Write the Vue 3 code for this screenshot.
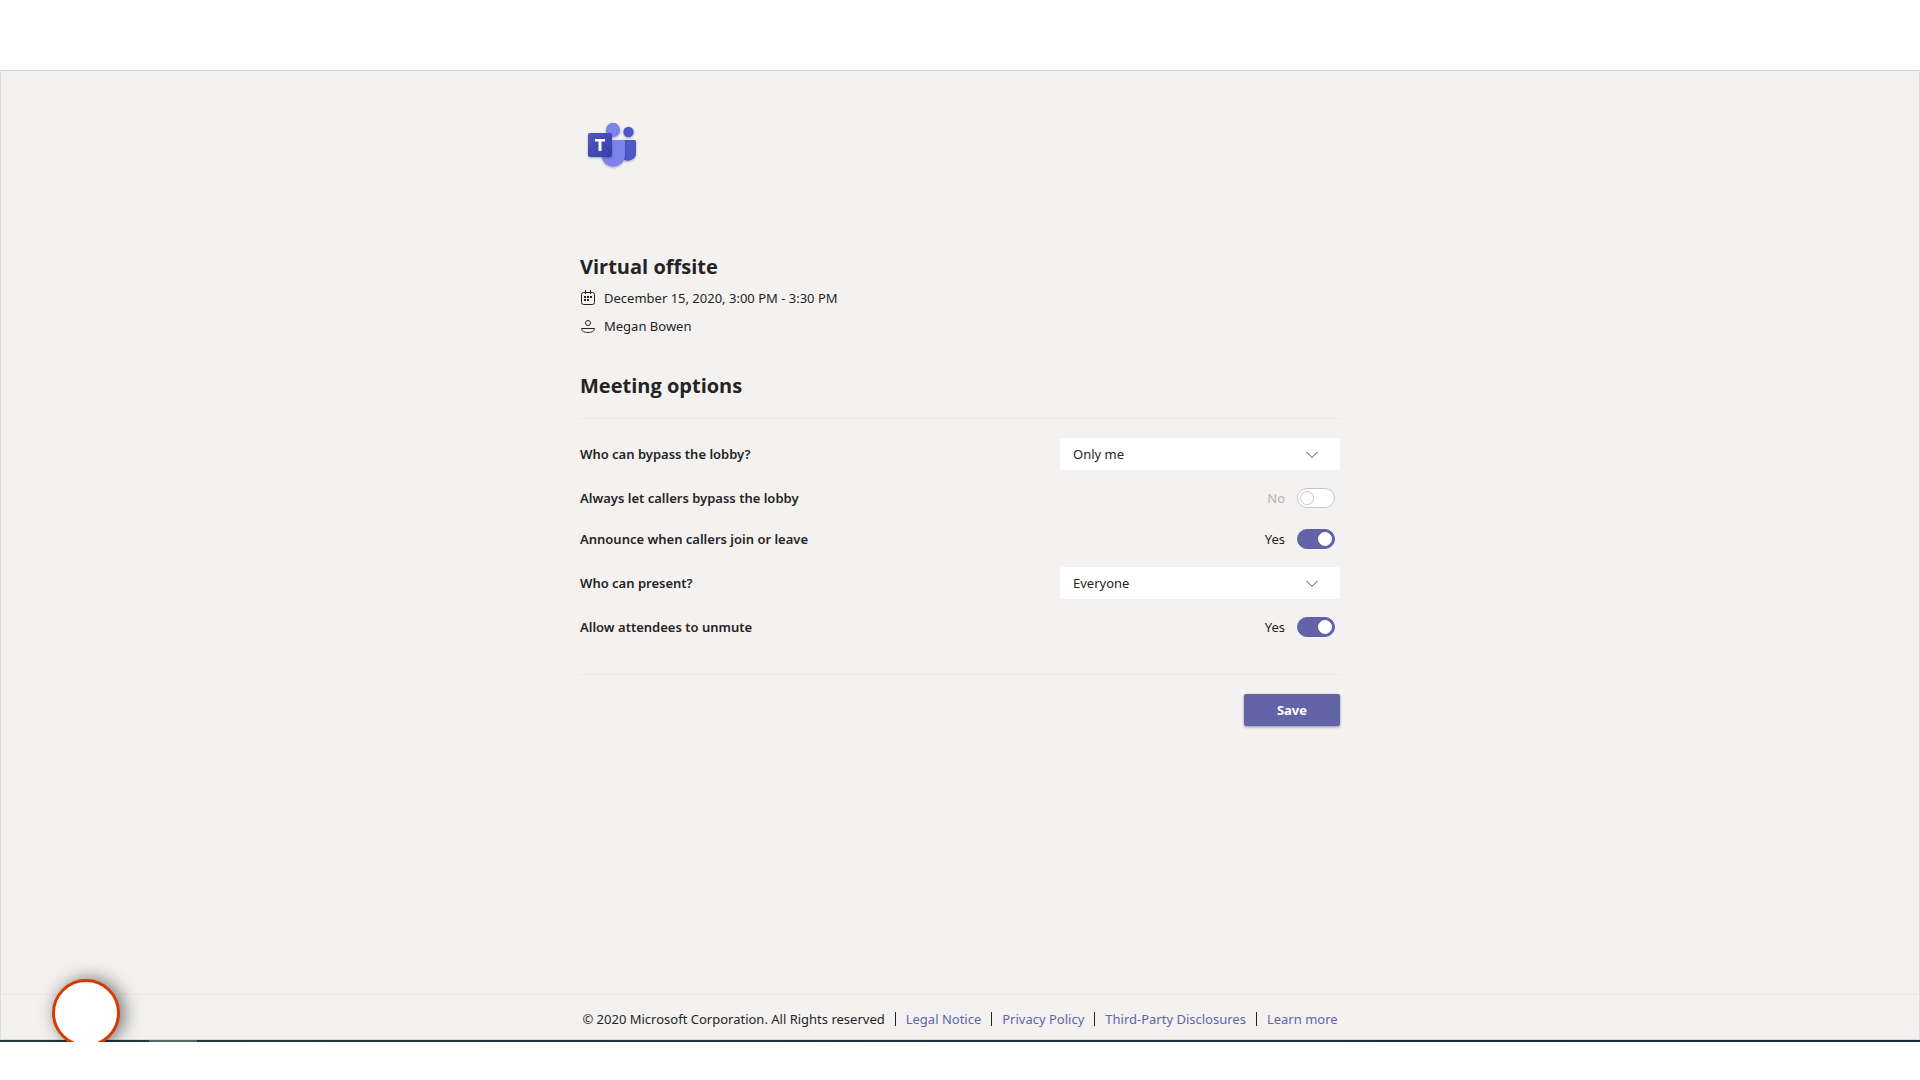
<script setup>
import { reactive } from 'vue'

const options = reactive([
  { id: 'lobby', label: 'Who can bypass the lobby?', type: 'select', value: 'Only me', choices: ['Only me', 'People in my organization', 'Everyone'] },
  { id: 'callers', label: 'Always let callers bypass the lobby', type: 'toggle', value: false },
  { id: 'announce', label: 'Announce when callers join or leave', type: 'toggle', value: true },
  { id: 'present', label: 'Who can present?', type: 'select', value: 'Everyone', choices: ['Everyone', 'People in my organization', 'Only me'] },
  { id: 'unmute', label: 'Allow attendees to unmute', type: 'toggle', value: true },
])

const links = ['Legal Notice', 'Privacy Policy', 'Third-Party Disclosures', 'Learn more']
</script>

<template>
  <div class="page">
    <div class="frame">
      <main class="content">
        <svg class="logo" viewBox="0 0 48 48" role="img" aria-label="Microsoft Teams">
          <defs>
            <linearGradient id="tile" x1="0" y1="0" x2="1" y2="1">
              <stop offset="0" stop-color="#5059c0" />
              <stop offset="1" stop-color="#353da5" />
            </linearGradient>
            <filter id="soft" x="-30%" y="-30%" width="160%" height="160%">
              <feDropShadow dx="0" dy="1" stdDeviation="1" flood-color="#000" flood-opacity="0.3" />
            </filter>
          </defs>
          <g filter="url(#soft)">
            <path d="M35 17h11.500a1.500 1.500 0 0 1 1.500 1.500V29a8 8 0 0 1-14 6z" fill="#5059c9" />
            <circle cx="40.500" cy="9" r="5.200" fill="#5059c9" />
          </g>
          <g filter="url(#soft)">
            <circle cx="25" cy="7" r="7.200" fill="#7b83eb" />
            <path d="M14 17h21.500a1.500 1.500 0 0 1 1.500 1.500V32a11.700 11.700 0 0 1-23.400 0z" fill="#7b83eb" />
          </g>
          <rect y="10" width="24" height="24" rx="2" fill="url(#tile)" filter="url(#soft)" />
          <path d="M7 16h10v2.500h-3.500V28h-3v-9.500H7z" fill="#fff" />
        </svg>

        <section class="meeting">
          <h1>Virtual offsite</h1>
          <p>
            <svg viewBox="0 0 16 16" aria-hidden="true">
              <path d="M5.500 0v4M10.500 0v4" class="line" />
              <rect x="1.500" y="2.500" width="13" height="12" rx="2" class="line" />
              <path d="M7 6h2v2H7zM10 6h2v2h-2zM4 6h2v2H4zM4 9h2v2H4zM7 9h2v2H7z" fill="#252423" />
            </svg>
            December 15, 2020, 3:00 PM - 3:30 PM
          </p>
          <p>
            <svg viewBox="0 0 16 16" aria-hidden="true">
              <circle cx="8" cy="5" r="2.500" class="line" />
              <path d="M1.500 10.500h13c0 2.500-2.500 4-6.500 4s-6.500-1.500-6.500-4z" class="line" />
            </svg>
            Megan Bowen
          </p>
        </section>

        <h2>Meeting options</h2>

        <form @submit.prevent>
          <div class="options">
            <div v-for="o in options" :key="o.id" class="row" :class="o.type">
              <label :for="o.id">{{ o.label }}</label>
              <div v-if="o.type === 'select'" class="dropdown">
                <select :id="o.id" v-model="o.value">
                  <option v-for="c in o.choices" :key="c">{{ c }}</option>
                </select>
                <svg viewBox="0 0 12 8" aria-hidden="true"><path d="M.5 1 6 6.500 11.500 1" /></svg>
              </div>
              <div v-else class="switch">
                <span :class="{ off: !o.value }">{{ o.value ? 'Yes' : 'No' }}</span>
                <input :id="o.id" v-model="o.value" type="checkbox" role="switch" />
              </div>
            </div>
          </div>
          <div class="actions">
            <button type="submit">Save</button>
          </div>
        </form>
      </main>

      <footer>
        <span>© 2020 Microsoft Corporation. All Rights reserved</span>
        <template v-for="l in links" :key="l">
          <i></i>
          <a href="#">{{ l }}</a>
        </template>
      </footer>
      <div class="presenter"></div>
    </div>
  </div>
</template>

<style>
body {
  margin: 0;
  background: #fff;
}
</style>

<style scoped>
*,
*::before,
*::after {
  box-sizing: border-box;
}

.page {
  display: flex;
  min-height: 100vh;
  padding: 70px 0 38px;
  font: 13px/20px "Segoe UI", "Noto Sans", sans-serif;
  color: #252423;
}

.frame {
  position: relative;
  display: flex;
  flex: 1;
  flex-direction: column;
  overflow: hidden;
  padding-bottom: 2px;
  background:
    linear-gradient(#55696c, #55696c) 149px 100% / 48px 2px no-repeat,
    linear-gradient(90deg, #23393e, #1b2942) 0 100% / 100% 2px no-repeat,
    #f3f2f1;
}

.frame::after {
  content: "";
  position: absolute;
  inset: 0 0 2px;
  border: 1px solid #dcdcdc;
  border-top-color: #d2d2d2;
  pointer-events: none;
}

.content {
  flex: 1;
  width: 100%;
  max-width: 760px;
  margin: 0 auto;
  padding-top: 53px;
}

.logo {
  display: block;
  width: 48px;
  height: 48px;
  margin-left: 8px;
  overflow: visible;
}

h1,
h2,
p {
  margin: 0;
}

h1,
h2 {
  font-family: "Segoe UI", "Open Sans", sans-serif;
  font-size: 20px;
  line-height: 28px;
  font-weight: 700;
}

.meeting {
  margin-top: 82px;
}

.meeting p {
  display: flex;
  align-items: center;
  gap: 8px;
  margin-top: 8px;
}

.meeting h1 + p {
  margin-top: 7px;
}

.meeting svg {
  width: 16px;
  height: 16px;
}

.line {
  fill: none;
  stroke: #252423;
}

h2 {
  margin-top: 36px;
}

.options {
  display: flex;
  flex-direction: column;
  gap: 15px;
  margin-top: 18px;
  padding: 19px 0 34px;
  border: solid #eae9e8;
  border-width: 1px 0;
}

.row {
  display: flex;
  align-items: center;
  justify-content: space-between;
  height: 32px;
}

.row.toggle {
  height: 26px;
}

.row label {
  font-weight: 600;
}

.dropdown {
  position: relative;
  width: 280px;
}

.dropdown select {
  display: block;
  width: 100%;
  height: 32px;
  padding: 0 40px 0 13px;
  border: 0;
  border-radius: 3px;
  appearance: none;
  background: #fff;
  color: inherit;
  font: inherit;
}

.dropdown svg {
  position: absolute;
  top: 13px;
  right: 22px;
  width: 12px;
  height: 8px;
  fill: none;
  stroke: #484644;
  pointer-events: none;
}

.switch {
  display: flex;
  align-items: center;
  gap: 12px;
  margin-right: 5px;
}

.off {
  color: #b5b3b1;
}

.switch input {
  display: flex;
  align-items: center;
  width: 38px;
  height: 20px;
  margin: 0;
  padding: 0 2px;
  border: 1px solid #c8c6c4;
  border-radius: 10px;
  appearance: none;
  background: #fff;
}

.switch input::before {
  content: "";
  width: 14px;
  height: 14px;
  border: 1px solid #c8c6c4;
  border-radius: 50%;
  background: #fff;
}

.switch input:checked {
  justify-content: flex-end;
  border-color: #6264a7;
  background: #6264a7;
}

.switch input:checked::before {
  border-color: #fff;
}

.actions {
  display: flex;
  justify-content: flex-end;
  padding: 19px 0;
}

button {
  width: 96px;
  height: 32px;
  border: 0;
  border-radius: 2px;
  background: #6264a7;
  box-shadow: 0 1px 3px rgba(0, 0, 0, 0.4);
  color: #fff;
  font: inherit;
  font-weight: 700;
}

footer {
  display: flex;
  align-items: center;
  justify-content: center;
  gap: 10px;
  height: 46px;
  padding-top: 2px;
  border-top: 1px solid #eae9e8;
}

footer i {
  width: 1px;
  height: 14px;
  background: #252423;
}

footer a {
  color: #6264a7;
  text-decoration: none;
}

.presenter {
  position: absolute;
  bottom: -5px;
  left: 52px;
  width: 68px;
  height: 68px;
  border: 3px solid #d83b01;
  border-radius: 50%;
  background: #fff;
  box-shadow: 4px 0 18px rgba(0, 0, 0, 0.55);
  z-index: 1;
}
</style>
